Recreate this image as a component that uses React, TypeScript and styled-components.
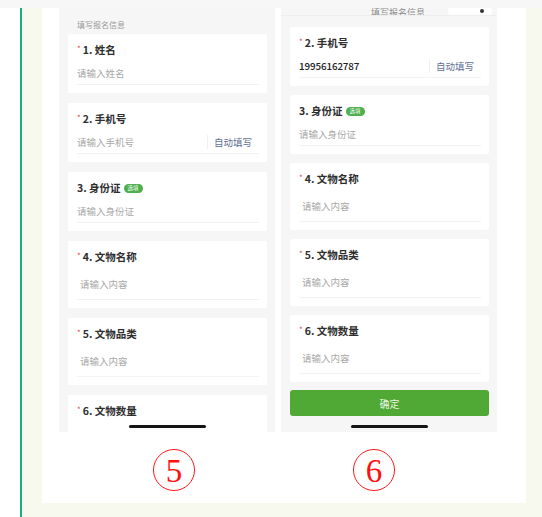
import React from "react";
import styled, { createGlobalStyle } from "styled-components";

const Global = createGlobalStyle`
  html, body { margin: 0; padding: 0; background: #ffffff; }
  body { font-family: "Noto Sans CJK SC", "Noto Sans", sans-serif; }
  * { box-sizing: border-box; }
`;

const Page = styled.div`
  width: 542px;
  height: 517px;
  display: flex;
  flex-direction: column;
  background: #ffffff;
  overflow: hidden;
`;

const TopStrip = styled.div`
  height: 8px;
  background: #f7f7f7;
  flex: none;
`;

const Body = styled.div`
  flex: 1;
  display: flex;
`;

const WhiteGutter = styled.div`
  width: 20px;
  background: #ffffff;
`;

const GreenRule = styled.div`
  width: 2px;
  background: #1aae83;
`;

const Cream = styled.div`
  flex: 1;
  background: #f7f9ee;
  padding: 0 16px 14px 20px;
  display: flex;
`;

const Panel = styled.div`
  flex: 1;
  background: #ffffff;
  display: flex;
  flex-direction: column;
`;

const Phones = styled.div`
  display: flex;
  gap: 6px;
  padding-left: 17px;
  height: 424px;
`;

const Phone = styled.div`
  position: relative;
  width: 216px;
  height: 424px;
  background: #f6f6f6;
  overflow: hidden;
  display: flex;
  flex-direction: column;
`;

const SectionLabel = styled.div`
  font-size: 8px;
  line-height: 10px;
  color: #9a9a9a;
  padding: 12px 0 4px 18px;
`;

const CardList = styled.div<{ $gap: number }>`
  display: flex;
  flex-direction: column;
  gap: ${(p) => p.$gap}px;
  padding: 0 8px 0 9px;
`;

const Card = styled.div`
  background: #ffffff;
  border-radius: 2px;
  padding: 9px 8px 8px 9px;
  flex: none;
`;

const Title = styled.div`
  font-size: 10.5px;
  line-height: 14px;
  height: 14px;
  font-weight: 700;
  color: #2e2e2e;
  display: flex;
  align-items: center;
  white-space: nowrap;
`;

const Star = styled.span`
  color: #e0474c;
  font-size: 8px;
  font-weight: 400;
  margin-right: 2px;
  position: relative;
  top: -1px;
`;

const Badge = styled.span`
  display: inline-flex;
  align-items: center;
  justify-content: center;
  margin-left: 3px;
  width: 19px;
  height: 9px;
  border-radius: 5px;
  background: #4daf4e;
  color: #ffffff;
  font-size: 5.5px;
  font-weight: 400;
  line-height: 9px;
`;

const InputRow = styled.div<{ $tall?: boolean }>`
  margin-top: 5px;
  height: ${(p) => (p.$tall ? 31 : 23)}px;
  border-bottom: 1px solid #f3f3f3;
  display: flex;
  align-items: center;
  padding-left: ${(p) => (p.$tall ? 3 : 0)}px;
`;

const Placeholder = styled.span`
  flex: 1;
  font-size: 9.5px;
  color: #a8a8a8;
  white-space: nowrap;
`;

const Value = styled.span`
  flex: 1;
  font-size: 9.8px;
  color: #222222;
  font-weight: 500;
  letter-spacing: -0.1px;
`;

const AutoFill = styled.span`
  border-left: 1px solid #f0f0f0;
  padding-left: 6px;
  margin-right: 7px;
  height: 14px;
  display: flex;
  align-items: center;
  font-size: 9.5px;
  color: #5f6f95;
  white-space: nowrap;
`;

const HomeBar = styled.div<{ $bottom: number }>`
  position: absolute;
  left: 70px;
  bottom: ${(p) => p.$bottom}px;
  width: 77px;
  height: 3px;
  border-radius: 2px;
  background: #151515;
`;

const NavBar = styled.div`
  height: 8px;
  overflow: hidden;
  display: flex;
  align-items: flex-end;
  justify-content: space-between;
  padding: 0 5px 0 10px;
  border-bottom: 1px solid #eeeeee;
  margin-bottom: 11px;
  flex: none;
`;

const NavTitle = styled.span`
  font-size: 9px;
  line-height: 12px;
  height: 12px;
  margin-bottom: -4px;
  color: #8a8a8a;
  margin-left: 80px;
`;

const Capsule = styled.div`
  width: 44px;
  height: 16px;
  border-radius: 8px;
  background: #ffffff;
  margin-bottom: -4px;
  display: flex;
  align-items: center;
  justify-content: flex-end;
  padding-right: 8px;
`;

const CapsuleDot = styled.span`
  width: 4px;
  height: 4px;
  border-radius: 50%;
  background: #333333;
`;

const Confirm = styled.div`
  margin: 8px 8px 0 9px;
  height: 26px;
  border-radius: 3px;
  background: #4fa934;
  color: #eaf6e4;
  font-size: 10px;
  display: flex;
  align-items: center;
  justify-content: center;
  flex: none;
`;

const Captions = styled.div`
  display: flex;
  gap: 158px;
  padding: 17px 0 0 111px;
`;

const Circled = styled.div`
  width: 42px;
  height: 42px;
  border: 1px solid #ff1a1a;
  border-radius: 50%;
  display: flex;
  align-items: center;
  justify-content: center;
  color: #ff1010;
  font-family: "Liberation Serif", "DejaVu Serif", serif;
  font-size: 33px;
  line-height: 33px;
  padding-top: 2px;
`;

type Field = {
  no: string;
  label: string;
  required?: boolean;
  optional?: boolean;
  placeholder?: string;
  value?: string;
  auto?: boolean;
  tall?: boolean;
};

const FieldCard: React.FC<{ f: Field }> = ({ f }) => (
  <Card>
    <Title>
      {f.required && <Star>*</Star>}
      {f.no}. {f.label}
      {f.optional && <Badge>选填</Badge>}
    </Title>
    <InputRow $tall={f.tall}>
      {f.value ? <Value>{f.value}</Value> : <Placeholder>{f.placeholder}</Placeholder>}
      {f.auto && <AutoFill>自动填写</AutoFill>}
    </InputRow>
  </Card>
);

const leftFields: Field[] = [
  { no: "1", label: "姓名", required: true, placeholder: "请输入姓名" },
  { no: "2", label: "手机号", required: true, placeholder: "请输入手机号", auto: true },
  { no: "3", label: "身份证", optional: true, placeholder: "请输入身份证" },
  { no: "4", label: "文物名称", required: true, placeholder: "请输入内容", tall: true },
  { no: "5", label: "文物品类", required: true, placeholder: "请输入内容", tall: true },
  { no: "6", label: "文物数量", required: true, placeholder: "请输入内容", tall: true },
];

const rightFields: Field[] = [
  { no: "2", label: "手机号", required: true, value: "19956162787", auto: true },
  { no: "3", label: "身份证", optional: true, placeholder: "请输入身份证" },
  { no: "4", label: "文物名称", required: true, placeholder: "请输入内容", tall: true },
  { no: "5", label: "文物品类", required: true, placeholder: "请输入内容", tall: true },
  { no: "6", label: "文物数量", required: true, placeholder: "请输入内容", tall: true },
];

export default function App() {
  return (
    <>
      <Global />
      <Page>
        <TopStrip />
        <Body>
          <WhiteGutter />
          <GreenRule />
          <Cream>
            <Panel>
              <Phones>
                <Phone>
                  <SectionLabel>填写报名信息</SectionLabel>
                  <CardList $gap={10}>
                    {leftFields.map((f) => (
                      <FieldCard key={f.no} f={f} />
                    ))}
                  </CardList>
                  <HomeBar $bottom={4} />
                </Phone>
                <Phone>
                  <NavBar>
                    <NavTitle>填写报名信息</NavTitle>
                    <Capsule>
                      <CapsuleDot />
                    </Capsule>
                  </NavBar>
                  <CardList $gap={9}>
                    {rightFields.map((f) => (
                      <FieldCard key={f.no} f={f} />
                    ))}
                  </CardList>
                  <Confirm>确定</Confirm>
                  <HomeBar $bottom={4} />
                </Phone>
              </Phones>
              <Captions>
                <Circled>5</Circled>
                <Circled>6</Circled>
              </Captions>
            </Panel>
          </Cream>
        </Body>
      </Page>
    </>
  );
}
